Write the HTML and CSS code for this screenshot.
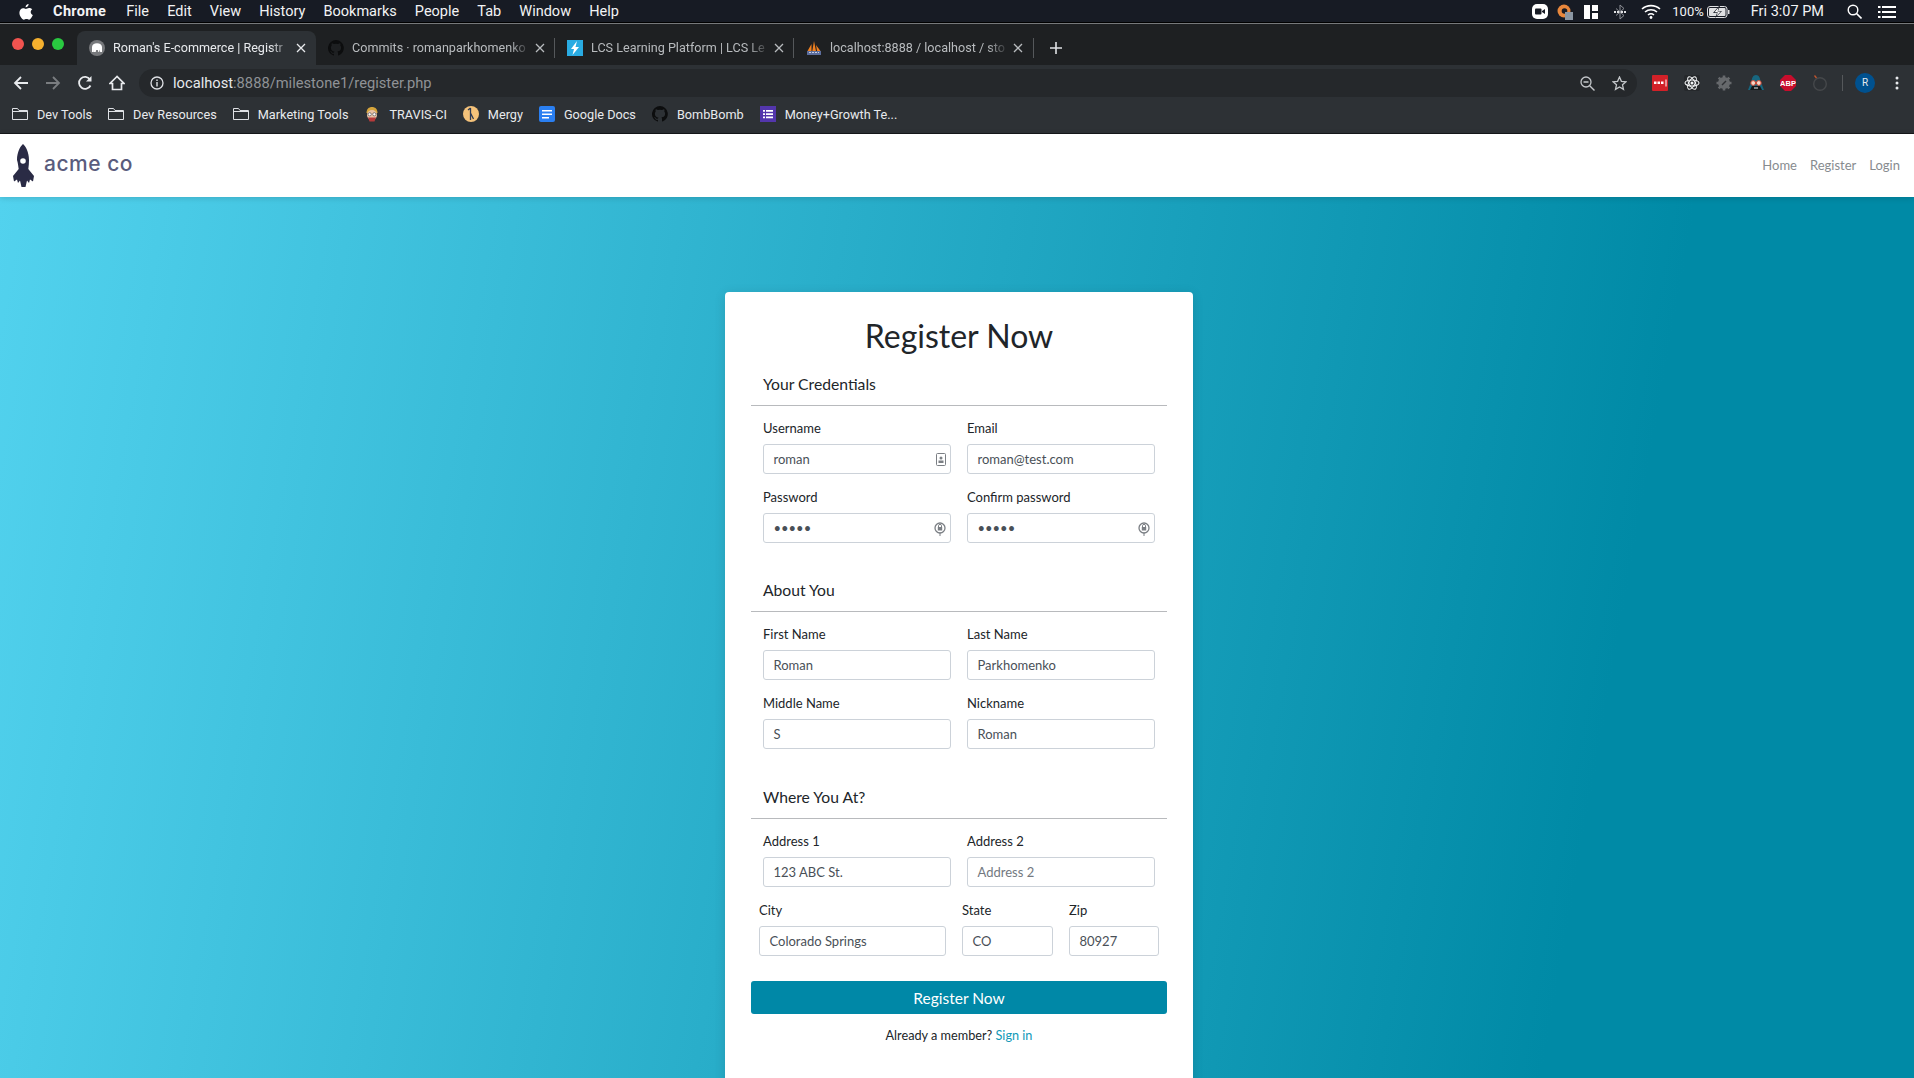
FILE: index.html
```html
<!DOCTYPE html>
<html lang="en">
<head>
    <meta charset="UTF-8">
    <title>Register Now</title>
    <link rel="stylesheet" href="styles.css">
</head>
<body>

<!-- Mac menu bar -->
<div class="menubar">
    <div class="menu-left">
        <svg class="apple" width="14" height="16" viewBox="0 0 14 16"><path fill="#fff" d="M9.6 0c.1 1.800-1.300 3.300-3 3.300C6.400 1.600 8 .2 9.600 0zM13.300 5.300c-1 .7-1.600 1.600-1.600 2.800 0 1.400.8 2.500 2.100 3-.5 1.500-2.100 4.600-3.700 4.600-.9 0-1.400-.6-2.600-.6s-1.800.6-2.600.6C3 15.700.4 11.900.4 8.800c0-2.900 1.900-4.600 3.700-4.600 1.100 0 2 .7 2.800.7.700 0 1.800-.8 3.100-.8 1 0 2.400.3 3.300 1.200z"/></svg>
        <span class="menu-app">Chrome</span>
        <span>File</span>
        <span>Edit</span>
        <span>View</span>
        <span>History</span>
        <span>Bookmarks</span>
        <span>People</span>
        <span>Tab</span>
        <span>Window</span>
        <span>Help</span>
    </div>
    <div class="menu-right">
        <svg class="st-zoom" width="16" height="15" viewBox="0 0 16 15"><rect width="16" height="15" rx="5" fill="#fff"/><rect x="3" y="4.500" width="6.500" height="6" rx="1" fill="#171b24"/><path d="M10 7l3-2v5l-3-2z" fill="#171b24"/></svg>
        <svg class="st-orange" width="16" height="16" viewBox="0 0 16 16"><circle cx="7" cy="7" r="6.500" fill="#e8873c"/><circle cx="7.500" cy="7" r="2.800" fill="#171b24"/><rect x="8" y="8" width="8" height="8" fill="#8b97a3"/></svg>
        <svg class="st-layout" width="14" height="14" viewBox="0 0 14 14"><path fill="#fff" d="M0 0h6v14H0zM8 0h6v6H8zM8 8h6v6H8z"/></svg>
        <svg class="st-bt" width="12" height="16" viewBox="0 0 12 16"><path fill="none" stroke="#8d9096" d="M6 1l4 3.500-8 7M6 15l4-3.500-8-7M6 1v14"/><path fill="#dfe0e2" d="M0 7h2v2H0zM3 7h2v2H3zM7 7h2v2H7zM10 7h2v2h-2z"/></svg>
        <svg class="st-wifi" width="20" height="15" viewBox="0 0 20 15"><g fill="none" stroke="#fff" stroke-width="1.600"><path d="M1 5c5-4.500 13-4.500 18 0"/><path d="M4 8c3.500-3 8.500-3 12 0"/><path d="M7 11c1.700-1.400 4.300-1.400 6 0"/></g><circle cx="10" cy="13.500" r="1.400" fill="#fff"/></svg>
        <span class="st-pct">100%</span>
        <svg class="st-batt" width="23" height="12" viewBox="0 0 23 12"><rect x=".5" y=".5" width="19.500" height="11" rx="2.500" fill="none" stroke="#dfe0e2"/><rect x="2" y="2" width="16.500" height="8" rx="1" fill="#dfe0e2"/><rect x="21" y="4" width="1.500" height="4" fill="#dfe0e2"/><path d="M12 0L6 7h4l-2 5 7-7h-4l2-5z" fill="#171b24"/><path d="M11.500 1.500L7.500 6.300h3.300l-1.300 3.500 4.300-4.400h-3.200z" fill="#fff"/></svg>
        <span class="st-time">Fri 3:07 PM</span>
        <svg class="st-search" width="15" height="15" viewBox="0 0 15 15"><circle cx="6" cy="6" r="4.800" fill="none" stroke="#fff" stroke-width="1.400"/><path d="M9.500 9.500l5 5" stroke="#fff" stroke-width="1.600"/></svg>
        <svg class="st-list" width="18" height="12" viewBox="0 0 18 12"><path fill="#fff" d="M0 0h2.500v2H0zM4 0h14v2H4zM0 5h2.500v2H0zM4 5h14v2H4zM0 10h2.500v2H0zM4 10h14v2H4z"/></svg>
    </div>
</div>

<!-- Tab strip -->
<div class="tabstrip">
    <div class="lights">
        <i class="light red"></i>
        <i class="light yellow"></i>
        <i class="light green"></i>
    </div>
    <div class="tab tab-active">
        <svg class="favicon" width="16" height="16" viewBox="0 0 16 16"><circle cx="8" cy="8" r="8" fill="#77797c"/><path fill="#fff" d="M3 12V7c0-2.500 2.200-3.800 5-3.800s5 1.300 5 3.800v5h-1.800l-.4-2.500-.7 2.500H9.300L8.800 10h-1.600l-.5 2H5l-.6-2.500L4.800 12z"/></svg>
        <span class="tab-title">Roman's E-commerce | Registr</span>
        <svg class="tab-close" width="10" height="10" viewBox="0 0 10 10"><path d="M1 1l8 8M9 1l-8 8" stroke="#e8eaed" stroke-width="1.300"/></svg>
    </div>
    <div class="tab">
        <svg class="favicon" width="16" height="16" viewBox="0 0 16 16"><path fill="#0c0d0e" d="M8 0a8 8 0 0 0-2.500 15.600c.4.100.5-.2.500-.4v-1.400c-2.200.5-2.700-1-2.700-1-.4-.9-.9-1.200-.9-1.200-.7-.5.100-.5.100-.5.800.100 1.200.8 1.200.8.700 1.200 1.900.9 2.300.7.100-.5.300-.9.500-1.100-1.800-.2-3.600-.9-3.600-4 0-.9.300-1.600.8-2.100-.1-.2-.4-1 .1-2.100 0 0 .7-.2 2.200.8a7.600 7.600 0 0 1 4 0c1.500-1 2.200-.8 2.200-.8.500 1.100.2 1.900.1 2.100.5.600.8 1.300.8 2.100 0 3.100-1.900 3.700-3.700 3.900.3.300.6.800.6 1.500v2.200c0 .2.100.5.600.4A8 8 0 0 0 8 0z"/></svg>
        <span class="tab-title">Commits · romanparkhomenko</span>
        <svg class="tab-close" width="10" height="10" viewBox="0 0 10 10"><path d="M1 1l8 8M9 1l-8 8" stroke="#b8bbbe" stroke-width="1.300"/></svg>
    </div>
    <div class="tab">
        <svg class="favicon" width="16" height="16" viewBox="0 0 16 16"><rect width="16" height="16" fill="#29abe2"/><path fill="#fff" d="M10 1L4 9h3l-1.500 6L12 7H8.500z"/></svg>
        <span class="tab-title">LCS Learning Platform | LCS Le</span>
        <svg class="tab-close" width="10" height="10" viewBox="0 0 10 10"><path d="M1 1l8 8M9 1l-8 8" stroke="#b8bbbe" stroke-width="1.300"/></svg>
    </div>
    <div class="tab">
        <svg class="favicon" width="16" height="16" viewBox="0 0 16 16"><path fill="#f08020" d="M1.500 11L5.500 4v7zM6.300 11L8 1l2 10zM11 11L10 5l4.500 6z"/><rect x="1" y="11" width="14" height="4" fill="#5c6d9c"/><path d="M3 12.500h10" stroke="#c9d0e2" stroke-dasharray="2 1"/></svg>
        <span class="tab-title">localhost:8888 / localhost / sto</span>
        <svg class="tab-close" width="10" height="10" viewBox="0 0 10 10"><path d="M1 1l8 8M9 1l-8 8" stroke="#b8bbbe" stroke-width="1.300"/></svg>
    </div>
    <i class="tab-sep"></i>
    <svg class="new-tab" width="12" height="12" viewBox="0 0 12 12"><path d="M6 0v12M0 6h12" stroke="#dfe1e5" stroke-width="1.600"/></svg>
</div>

<!-- Address bar -->
<div class="toolbar">
    <div class="nav-btns">
        <svg width="16" height="16" viewBox="0 0 16 16"><path d="M15 8H2M8 2L2 8l6 6" fill="none" stroke="#e8eaed" stroke-width="1.800"/></svg>
        <svg width="16" height="16" viewBox="0 0 16 16"><path d="M1 8h13M8 2l6 6-6 6" fill="none" stroke="#7a7d80" stroke-width="1.800"/></svg>
        <svg width="16" height="16" viewBox="0 0 16 16"><path d="M13.500 10.500A6 6 0 1 1 13 4.500" fill="none" stroke="#e8eaed" stroke-width="1.800"/><path d="M14.500 1v5.500H9z" fill="#e8eaed"/></svg>
        <svg width="16" height="16" viewBox="0 0 16 16"><path d="M8 1.500L1 8.500h2.500v6h9v-6H15z" fill="none" stroke="#e8eaed" stroke-width="1.700"/></svg>
    </div>
    <div class="omnibox">
        <svg class="info" width="14" height="14" viewBox="0 0 14 14"><circle cx="7" cy="7" r="6" fill="none" stroke="#dfe1e5" stroke-width="1.300"/><path d="M6.300 6h1.400v4.500H6.300zM6.300 3.500h1.400v1.400H6.300z" fill="#dfe1e5"/></svg>
        <span class="url"><b>localhost</b>:8888/milestone1/register.php</span>
        <div class="omni-right">
            <svg width="15" height="15" viewBox="0 0 15 15"><circle cx="6" cy="6" r="5" fill="none" stroke="#c4c7ca" stroke-width="1.300"/><path d="M3.500 6h5M9.700 9.700l4.800 4.800" stroke="#c4c7ca" stroke-width="1.400"/></svg>
            <svg width="15" height="15" viewBox="0 0 15 15"><path d="M7.500 1l1.900 4.300 4.600.5-3.500 3 1 4.600-4-2.400-4 2.400 1-4.600-3.500-3 4.600-.5z" fill="none" stroke="#c4c7ca" stroke-width="1.300"/></svg>
        </div>
    </div>
    <div class="extensions">
        <svg width="16" height="16" viewBox="0 0 16 16"><rect width="16" height="16" rx="1" fill="#d22128"/><path fill="#fff" d="M2 6.500h2.500V9H2zM5.500 6.500H8V9H5.500zM9 6.500h2.500V9H9zM13.500 4.500h1v7h-1z"/></svg>
        <svg width="16" height="16" viewBox="0 0 16 16"><rect width="16" height="16" rx="2" fill="#25282b"/><g fill="none" stroke="#f1f3f4" stroke-width="1.100"><ellipse cx="8" cy="8" rx="7" ry="3"/><ellipse cx="8" cy="8" rx="7" ry="3" transform="rotate(60 8 8)"/><ellipse cx="8" cy="8" rx="7" ry="3" transform="rotate(120 8 8)"/></g><circle cx="8" cy="8" r="1.500" fill="#f1f3f4"/></svg>
        <svg width="16" height="16" viewBox="0 0 16 16"><circle cx="8" cy="8" r="6" fill="#66696c"/><path d="M8 .5v3M8 12.500v3M.5 8h3M12.500 8h3M2.700 2.700l2 2M11.300 11.300l2 2M13.300 2.700l-2 2M4.700 11.300l-2 2" stroke="#66696c" stroke-width="2.600"/><path d="M6 10l4-4" stroke="#2e3134" stroke-width="1.400"/></svg>
        <svg width="16" height="16" viewBox="0 0 16 16"><path d="M8 0c3 0 4 3 4.500 6l3.500 9H0l3.500-9C4 3 5 0 8 0z" fill="#17667f"/><path d="M2 15l2-4h8l2 4z" fill="#15181b"/><circle cx="5.200" cy="8" r="2.400" fill="#f3d7c8" stroke="#d4432f"/><circle cx="10.800" cy="8" r="2.400" fill="#f3d7c8" stroke="#d4432f"/><path d="M6 13h4" stroke="#e8eaed"/></svg>
        <svg width="16" height="16" viewBox="0 0 16 16"><path d="M5 0h6l5 5v6l-5 5H5l-5-5V5z" fill="#c70d2c"/><text x="8" y="10.800" class="abp">ABP</text></svg>
        <svg width="16" height="16" viewBox="0 0 16 16"><circle cx="8" cy="9" r="6.300" fill="none" stroke="#45484b" stroke-width="1.400"/><path d="M2.500 .5l2 2.500" stroke="#c2552d" stroke-width="1.300"/></svg>
        <i class="tool-sep"></i>
        <span class="avatar">R</span>
        <svg class="tool-dots" width="4" height="14" viewBox="0 0 4 14"><circle cx="2" cy="2" r="1.500" fill="#e8eaed"/><circle cx="2" cy="7" r="1.500" fill="#e8eaed"/><circle cx="2" cy="12" r="1.500" fill="#e8eaed"/></svg>
    </div>
</div>

<!-- Bookmarks -->
<div class="bookmarks">
    <span class="mark">
        <svg width="16" height="14" viewBox="0 0 16 14"><path d="M.5 12.500V1.500h5l1.500 2h8.500v9z" fill="none" stroke="#dfe1e5"/><path d="M.5 4.500h15" stroke="#dfe1e5"/></svg>
        Dev Tools
    </span>
    <span class="mark">
        <svg width="16" height="14" viewBox="0 0 16 14"><path d="M.5 12.500V1.500h5l1.500 2h8.500v9z" fill="none" stroke="#dfe1e5"/><path d="M.5 4.500h15" stroke="#dfe1e5"/></svg>
        Dev Resources
    </span>
    <span class="mark">
        <svg width="16" height="14" viewBox="0 0 16 14"><path d="M.5 12.500V1.500h5l1.500 2h8.500v9z" fill="none" stroke="#dfe1e5"/><path d="M.5 4.500h15" stroke="#dfe1e5"/></svg>
        Marketing Tools
    </span>
    <span class="mark">
        <svg width="16" height="16" viewBox="0 0 16 16"><path d="M2.500 7c0-4 2.300-6 5.500-6s5.500 2 5.500 6z" fill="#d6a53c"/><circle cx="8" cy="9" r="5" fill="#e9c3a6"/><circle cx="5.700" cy="8.300" r="1.600" fill="#fff" stroke="#555" stroke-width=".7"/><circle cx="10.300" cy="8.300" r="1.600" fill="#fff" stroke="#555" stroke-width=".7"/><path d="M4 11.500h8L10.500 15.500h-5z" fill="#b53a3a"/></svg>
        TRAVIS-CI
    </span>
    <span class="mark">
        <svg width="16" height="16" viewBox="0 0 16 16"><circle cx="8" cy="8" r="8" fill="#f4c27a"/><path d="M7.500 2v12M7.500 7l3 6M5 4l2.500-2" fill="none" stroke="#2c3a55" stroke-width="1.300"/></svg>
        Mergy
    </span>
    <span class="mark">
        <svg width="16" height="16" viewBox="0 0 16 16"><rect width="16" height="16" rx="2" fill="#2a7ff1"/><path d="M3 4h10v1.600H3zM3 7.500h10v1.600H3zM3 11h7v1.600H3z" fill="#fff"/></svg>
        Google Docs
    </span>
    <span class="mark">
        <svg width="16" height="16" viewBox="0 0 16 16"><path fill="#0c0d0e" d="M8 0a8 8 0 0 0-2.500 15.600c.4.100.5-.2.500-.4v-1.400c-2.200.5-2.700-1-2.700-1-.4-.9-.9-1.200-.9-1.200-.7-.5.100-.5.100-.5.800.100 1.200.8 1.200.8.700 1.200 1.900.9 2.300.7.100-.5.300-.9.500-1.100-1.800-.2-3.600-.9-3.600-4 0-.9.300-1.600.8-2.100-.1-.2-.4-1 .1-2.100 0 0 .7-.2 2.200.8a7.600 7.600 0 0 1 4 0c1.500-1 2.200-.8 2.200-.8.500 1.100.2 1.900.1 2.100.5.600.8 1.300.8 2.100 0 3.100-1.900 3.700-3.700 3.900.3.300.6.800.6 1.500v2.200c0 .2.100.5.600.4A8 8 0 0 0 8 0z"/></svg>
        BombBomb
    </span>
    <span class="mark">
        <svg width="16" height="16" viewBox="0 0 16 16"><rect width="16" height="16" fill="#5336ac"/><path d="M3 4h2v1.800H3zM6 4h7v1.800H6zM3 7.200h2V9H3zM6 7.200h7V9H6zM3 10.400h2v1.800H3zM6 10.400h7v1.800H6z" fill="#fff"/></svg>
        Money+Growth Te...
    </span>
</div>

<!-- Site header -->
<nav class="site-nav">
    <a class="brand" href="#">
        <svg width="22" height="43" viewBox="0 0 22 43"><path fill="#2a2b45" fill-rule="evenodd" d="M11 0c2.500 2 6 8 6 16 0 3-.2 6-.7 9l5.700 7-1 5.500-3-2-1 3.500-2-2.500-1.500 6.500H9.500L8 36.500l-2 2.500-1-3.500-3 2-1-5.500 5.700-7C6.200 22 6 19 5 16c0-8 3.500-14 6-16zm0 19.800a2.800 2.800 0 1 0 0-5.600 2.800 2.800 0 0 0 0 5.600z"/></svg>
        <span>acme co</span>
    </a>
    <div class="site-links">
        <a href="#">Home</a>
        <a href="#">Register</a>
        <a href="#">Login</a>
    </div>
</nav>

<!-- Register form -->
<main class="page">
    <form class="card">
        <h1>Register Now</h1>

        <h2 class="section-title">Your Credentials</h2>
        <div class="field-row">
            <div class="field">
                <label>Username</label>
                <div class="input has-icon">
                    roman
                    <svg class="autofill" width="10" height="13" viewBox="0 0 10 13"><rect x=".5" y=".5" width="9" height="12" rx="1" fill="none" stroke="#7b7f84"/><circle cx="5" cy="5" r="1.500" fill="#7b7f84"/><path d="M2.500 7.500h5V10h-5z" fill="#7b7f84"/></svg>
                </div>
            </div>
            <div class="field">
                <label>Email</label>
                <div class="input">roman@test.com</div>
            </div>
        </div>
        <div class="field-row">
            <div class="field">
                <label>Password</label>
                <div class="input input-password has-icon">
                    •••••
                    <svg class="autofill" width="12" height="14" viewBox="0 0 12 14"><circle cx="6" cy="6" r="5" fill="none" stroke="#7b7f84" stroke-width="1.300"/><rect x="3.800" y="5" width="4.400" height="3.500" fill="#7b7f84"/><path d="M4.500 5V3.800a1.500 1.500 0 0 1 3 0V5" fill="none" stroke="#7b7f84"/><path d="M6 10.500V14" stroke="#7b7f84"/></svg>
                </div>
            </div>
            <div class="field">
                <label>Confirm password</label>
                <div class="input input-password has-icon">
                    •••••
                    <svg class="autofill" width="12" height="14" viewBox="0 0 12 14"><circle cx="6" cy="6" r="5" fill="none" stroke="#7b7f84" stroke-width="1.300"/><rect x="3.800" y="5" width="4.400" height="3.500" fill="#7b7f84"/><path d="M4.500 5V3.800a1.500 1.500 0 0 1 3 0V5" fill="none" stroke="#7b7f84"/><path d="M6 10.500V14" stroke="#7b7f84"/></svg>
                </div>
            </div>
        </div>

        <h2 class="section-title section-next">About You</h2>
        <div class="field-row">
            <div class="field">
                <label>First Name</label>
                <div class="input">Roman</div>
            </div>
            <div class="field">
                <label>Last Name</label>
                <div class="input">Parkhomenko</div>
            </div>
        </div>
        <div class="field-row">
            <div class="field">
                <label>Middle Name</label>
                <div class="input">S</div>
            </div>
            <div class="field">
                <label>Nickname</label>
                <div class="input">Roman</div>
            </div>
        </div>

        <h2 class="section-title section-next section-last">Where You At?</h2>
        <div class="field-row">
            <div class="field">
                <label>Address 1</label>
                <div class="input">123 ABC St.</div>
            </div>
            <div class="field">
                <label>Address 2</label>
                <div class="input placeholder">Address 2</div>
            </div>
        </div>
        <div class="field-row field-row-wide">
            <div class="field field-city">
                <label>City</label>
                <div class="input">Colorado Springs</div>
            </div>
            <div class="field field-state">
                <label>State</label>
                <div class="input">CO</div>
            </div>
            <div class="field field-zip">
                <label>Zip</label>
                <div class="input">80927</div>
            </div>
        </div>

        <button type="button" class="submit-btn">Register Now</button>
        <p class="signin">Already a member? <a href="#">Sign in</a></p>
    </form>
</main>

</body>
</html>
```

FILE: styles.css
```css
* {
    box-sizing: border-box;
}
html, body {
    margin: 0;
    height: 100%;
    overflow: hidden;
}
body {
    display: flex;
    flex-direction: column;
    font-family: Lato, sans-serif;
    color: #212529;
}

/* Mac menu bar */
.menubar {
    height: 24px;
    flex: none;
    display: flex;
    justify-content: space-between;
    background: #171b24;
    border-bottom: 1px solid #77797b;
    box-shadow: inset 0 -1px 0 #000;
    font: 14.500px Roboto, sans-serif;
    color: #f2f3f4;
}
.menu-left, .menu-right {
    display: flex;
    align-items: center;
}
.menu-left {
    padding-left: 19px;
    gap: 18.100px;
}
.menu-left .apple {
    margin-right: 2px;
}
.menu-app {
    margin-right: 2px;
    font-weight: 700;
    letter-spacing: .3px;
}
.menu-right {
    padding-right: 18px;
}
.st-orange { margin-left: 9px; }
.st-layout { margin-left: 11px; }
.st-bt { margin-left: 16px; }
.st-wifi { margin-left: 15px; }
.st-pct { margin-left: 11px; font-size: 13px; }
.st-batt { margin-left: 3px; }
.st-time { margin-left: 21px; }
.st-search { margin-left: 23px; }
.st-list { margin-left: 16px; }

/* Chrome tabs */
.tabstrip {
    height: 41px;
    flex: none;
    display: flex;
    align-items: flex-end;
    background: #1e2022;
    font: 12.600px Roboto, sans-serif;
    color: #b8bbbe;
}
.lights {
    width: 77px;
    height: 41px;
    flex: none;
    display: flex;
    gap: 8px;
    padding: 14px 0 0 12px;
}
.light {
    width: 12px;
    height: 12px;
    border-radius: 50%;
}
.red { background: #f1534f; }
.yellow { background: #f5b02e; }
.green { background: #29c940; }
.tab {
    position: relative;
    width: 239px;
    height: 34px;
    flex: none;
    display: flex;
    align-items: center;
    padding: 0 10px 0 12px;
}
.tab + .tab::before {
    content: "";
    position: absolute;
    left: -1px;
    top: 7px;
    height: 20px;
    border-left: 1px solid #55585b;
}
.tab-active + .tab::before {
    display: none;
}
.tab-active {
    background: #2d3135;
    border-radius: 8px 8px 0 0;
    color: #e8eaed;
}
.favicon {
    flex: none;
}
.tab-title {
    flex: 1;
    min-width: 0;
    margin: 0 0 1px 8px;
    white-space: nowrap;
    overflow: hidden;
    -webkit-mask-image: linear-gradient(to right, #000 88%, transparent);
    mask-image: linear-gradient(to right, #000 88%, transparent);
}
.tab-close {
    flex: none;
    margin-left: 4px;
}
.tab-sep {
    width: 1px;
    height: 20px;
    flex: none;
    margin: 0 16px 7px 0;
    background: #55585b;
}
.new-tab {
    flex: none;
    margin-bottom: 11px;
}

/* Address bar */
.toolbar {
    height: 32px;
    flex: none;
    display: flex;
    align-items: flex-end;
    background: #2d3135;
}
.nav-btns {
    width: 139px;
    height: 28px;
    flex: none;
    display: flex;
    align-items: center;
    gap: 16px;
    padding-left: 13px;
}
.omnibox {
    width: 1498px;
    height: 28px;
    flex: none;
    display: flex;
    align-items: center;
    padding: 0 10px 0 11px;
    background: #25282b;
    border-radius: 14px;
}
.url {
    margin-left: 9px;
    font: 14.700px Roboto, sans-serif;
    color: #8f9296;
}
.url b {
    font-weight: 400;
    color: #e8eaed;
}
.omni-right {
    margin-left: auto;
    display: flex;
    gap: 17px;
}
.extensions {
    height: 28px;
    flex: 1;
    display: flex;
    align-items: center;
    gap: 16px;
    padding-left: 15px;
}
.abp {
    font: 700 7.500px "Liberation Sans", sans-serif;
    fill: #fff;
    text-anchor: middle;
}
.tool-sep {
    width: 1px;
    height: 16px;
    margin-left: -2px;
    background: #55585b;
}
.avatar {
    width: 20px;
    height: 20px;
    margin-left: -4px;
    border-radius: 50%;
    background: #00518f;
    color: #e8eaed;
    font: 10px/20px Roboto, sans-serif;
    text-align: center;
}
.tool-dots {
    margin-left: 4px;
}

/* Bookmarks */
.bookmarks {
    height: 37px;
    flex: none;
    display: flex;
    align-items: center;
    gap: 16px;
    padding: 0 0 2px 12px;
    background: #2d3135;
    border-bottom: 1px solid #16181a;
    font: 12.700px Roboto, sans-serif;
    color: #e8eaed;
}
.mark {
    display: flex;
    align-items: center;
    gap: 9px;
    white-space: nowrap;
}

/* Site header */
.site-nav {
    position: relative;
    height: 63px;
    flex: none;
    display: flex;
    align-items: center;
    justify-content: space-between;
    padding: 0 14px 0 12px;
    background: #fff;
    box-shadow: 0 1px 6px rgba(0, 0, 0, .15);
}
.brand {
    display: flex;
    align-items: center;
    gap: 10px;
    text-decoration: none;
    font: 500 21px Inter, sans-serif;
    letter-spacing: .5px;
    color: #5a5c7d;
}
.brand span {
    margin-bottom: 4px;
}
.site-links {
    display: flex;
    gap: 13px;
    margin-bottom: 2px;
    font-size: 13px;
}
.site-links a {
    color: #878b8f;
    text-decoration: none;
}

/* Form page */
.page {
    flex: 1;
    min-height: 0;
    padding: 95px 0 0 4px;
    background: linear-gradient(100deg, #52d2ee 0%, #008aa6 82%);
}
.card {
    width: 468px;
    height: 900px;
    margin: 0 auto;
    padding: 0 26px;
    background: #fff;
    border-radius: 4px;
    box-shadow: 0 2px 12px rgba(0, 0, 0, .12);
}
h1 {
    margin: 0;
    padding: 22px 0 7px;
    font-size: 32px;
    font-weight: 400;
    line-height: 44px;
    text-align: center;
}
.section-title {
    margin: 0 0 14px;
    padding: 7px 12px 9px;
    border-bottom: 1px solid #b8babd;
    font-size: 15.700px;
    font-weight: 400;
    line-height: 24px;
}
.section-next {
    margin-top: 28px;
}
.section-last {
    margin-top: 29px;
}
.field-row {
    display: flex;
    gap: 16px;
    padding: 0 12px;
    margin-bottom: 15px;
}
.field-row-wide {
    padding: 0 8px;
    margin-bottom: 0;
}
.field {
    width: 188px;
}
.field-city {
    width: 187px;
}
.field-state {
    width: 91px;
}
.field-zip {
    width: 90px;
}
label {
    display: block;
    margin-bottom: 8px;
    font-size: 13px;
    line-height: 16px;
}
.input {
    position: relative;
    height: 30px;
    padding: 0 10px 0 9.500px;
    border: 1px solid #ccd2d9;
    border-radius: 3px;
    background: #fff;
    color: #495057;
    font-size: 13px;
    line-height: 29px;
}
.placeholder {
    color: #73797f;
}
.autofill {
    position: absolute;
    right: 4px;
    top: 8px;
}
.submit-btn {
    display: block;
    width: 100%;
    height: 33px;
    margin-top: 25px;
    border: none;
    border-radius: 3px;
    background: #0088a7;
    color: #fff;
    font: 15.500px Lato, sans-serif;
}
.signin {
    margin: 13px 0 0;
    font-size: 12.700px;
    line-height: 16px;
    text-align: center;
}
.signin a {
    color: #1199b8;
    text-decoration: none;
}
```
